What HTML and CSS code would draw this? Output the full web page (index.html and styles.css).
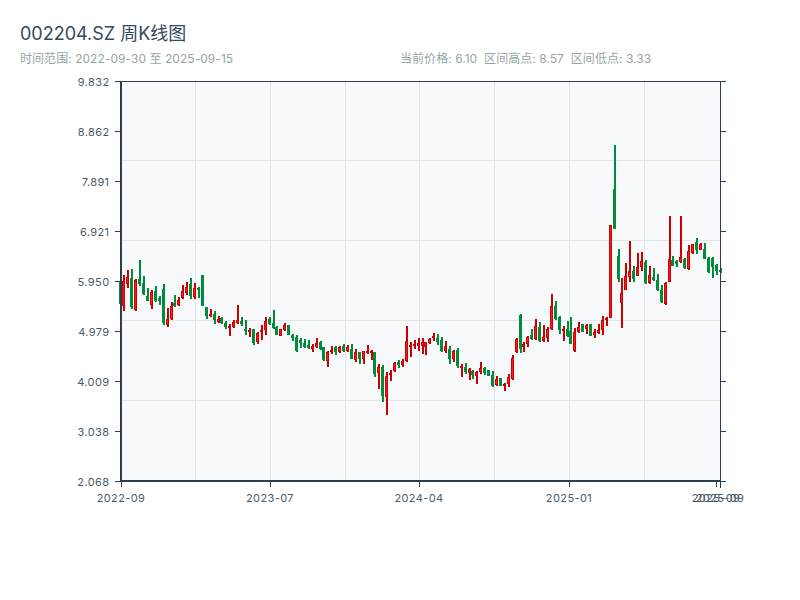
FILE: index.html
```html
<!DOCTYPE html>
<html lang="zh-CN">
<head>
  <meta charset="UTF-8">
  <title>002204.SZ 周K线图</title>
  <link rel="stylesheet" href="styles.css">
</head>
<body>
  <div class="page">
    <h1 class="title">002204.SZ 周K线图</h1>
    <div class="info">
      <span>时间范围: 2022-09-30 至 2025-09-15</span>
      <span>当前价格: 6.10 &nbsp;区间高点: 8.57 &nbsp;区间低点: 3.33</span>
    </div>
    <svg id="chart" class="chart" viewBox="20 70 760 460"></svg>
  </div>
  <script src="chart.js"></script>
</body>
</html>
```

FILE: styles.css
```css
* {
  margin: 0;
  padding: 0;
  box-sizing: border-box;
}
body {
  background: #fff;
  font-family: Inter, "Noto Sans CJK SC", sans-serif;
}
.page {
  padding: 20px 20px 0;
}
.title {
  font-size: 18px;
  font-weight: 400;
  line-height: 28px;
  color: #34495e;
}
.info {
  display: grid;
  grid-template-columns: 1fr 1fr;
  margin: 3px 0;
  font-size: 12px;
  line-height: 16px;
  letter-spacing: 0.05px;
  color: #95a5a6;
}
.chart {
  display: block;
  width: 760px;
  height: 460px;
}
.plot {
  fill: #f8f9fa;
}
.grid {
  stroke: #e2e6ea;
  stroke-width: 1;
}
.axis {
  stroke: #2c3e50;
  stroke-width: 1;
  fill: none;
}
.axis-main {
  stroke: #2c3e50;
  stroke-width: 2;
}
.label {
  font-size: 11px;
  letter-spacing: 0.4px;
  fill: #4a5b6c;
}
.label-y {
  text-anchor: end;
}
.label-x {
  text-anchor: middle;
}
.up-line {
  fill: #cc0000;
}
.up-body {
  fill: #ff1a1a;
  stroke: #cc0000;
  stroke-width: 1;
}
.down-line,
.down-body {
  fill: #008c3a;
}
```

FILE: chart.js
```js
// x, high, low, body top, body bottom, r = red / g = green (page pixels)
const candles = [
  [120,281,304,281,304,'g'],[123.7,275,311,281,306,'r'],[127.7,270,288,277,284,'r'],[131.7,269,309,278,307,'g'],
  [135.3,279,311,280,310,'r'],[139.7,260,286,279,284,'g'],[143.3,276,295,283,294,'g'],[147.3,288,301,296,301,'g'],
  [151.3,290,309,292,305,'r'],[155.3,286,302,291,301,'g'],[159.3,296,305,298,301,'g'],[163.3,284,325,289,323,'g'],
  [167.3,308,327,319,325,'r'],[171,302,320,306,319,'r'],[174.3,295,307,303,306,'g'],[178.3,297,306,300,305,'r'],
  [182.3,285,299,291,298,'r'],[186.3,282,295,287,293,'r'],[190.3,278,299,284,296,'g'],[194.3,283,299,288,297,'r'],
  [198.3,287,298,288,290,'g'],[202.3,275,306,275,306,'g'],[206.3,307,319,307,316,'g'],[210.3,309,317,314,316,'r'],
  [214.3,311,324,314,320,'g'],[218.3,316,323,319,322,'r'],[221.7,317,324,318,323,'g'],[225.7,321,329,323,327,'g'],
  [229.7,324,336,326,328,'r'],[233.7,320,328,322,327,'r'],[237.7,305,324,320,323,'r'],[241.7,317,326,321,324,'g'],
  [245.7,320,335,329,331,'g'],[249.7,328,337,330,332,'r'],[253.7,329,345,329,343,'g'],[257.7,332,344,333,342,'r'],
  [261.7,325,340,330,332,'r'],[265.3,317,335,321,330,'r'],[269.3,317,325,319,324,'g'],[273,310,329,323,328,'g'],
  [276.3,326,335,327,335,'g'],[280.3,329,336,329,336,'r'],[284.3,323,331,325,330,'r'],[288.3,325,335,325,335,'g'],
  [292.3,334,341,335,338,'g'],[296.3,335,352,337,351,'g'],[300.7,338,348,340,343,'g'],[304.7,339,348,343,347,'g'],
  [308.7,340,349,345,348,'g'],[312.7,344,352,346,349,'r'],[316.7,338,348,343,347,'r'],[320.7,341,350,342,349,'g'],
  [323.7,347,361,347,360,'g'],[327.7,351,367,352,361,'r'],[331.7,346,354,350,352,'r'],[335.7,346,355,347,352,'g'],
  [339.7,346,353,347,352,'r'],[343.7,344,352,346,351,'g'],[347.7,345,352,347,351,'r'],[351.7,344,359,349,359,'g'],
  [355.7,349,362,352,360,'r'],[359.7,352,364,352,359,'g'],[363.3,351,364,351,359,'r'],[367.7,345,354,351,353,'r'],
  [371,350,360,351,353,'r'],[374.7,352,377,352,374,'g'],[378.7,364,389,367,373,'r'],[382.7,365,402,367,396,'g'],
  [386.7,372,415,376,397,'r'],[390.7,370,381,373,375,'r'],[394.7,362,372,363,371,'r'],[398.7,360,368,362,365,'g'],
  [402.7,359,367,361,365,'r'],[406.7,326,362,341,361,'r'],[410.7,342,357,345,347,'r'],[414.7,340,349,344,346,'r'],
  [418.7,338,351,343,346,'r'],[422,338,354,342,346,'r'],[425.7,342,355,342,347,'r'],[429.3,338,344,339,343,'r'],
  [433.3,333,341,336,338,'r'],[437.3,334,345,338,342,'g'],[441.3,337,352,340,351,'g'],[445.3,341,353,346,351,'r'],
  [449.3,346,364,349,359,'g'],[453.3,350,362,351,359,'r'],[457.3,348,368,350,366,'g'],[461.3,364,377,366,368,'r'],
  [465.3,363,374,367,372,'g'],[469.3,368,380,369,373,'r'],[472.7,370,379,371,375,'g'],[476.7,371,384,372,376,'r'],
  [480.7,362,374,368,372,'r'],[484.7,367,375,368,373,'g'],[488.7,370,376,370,376,'g'],[492.7,371,387,375,386,'g'],
  [496.7,376,386,379,385,'r'],[500.7,378,386,378,386,'g'],[504.7,383,391,384,386,'r'],[508.7,374,387,377,384,'r'],
  [512.7,355,380,358,379,'r'],[516.7,338,353,339,352,'r'],[520.7,314,353,315,349,'g'],[523.7,342,352,344,347,'r'],
  [527.7,336,347,337,344,'r'],[531.7,329,340,335,339,'g'],[535.7,319,340,326,339,'r'],[539.7,322,342,327,341,'g'],
  [543.7,325,342,337,341,'r'],[547.7,327,342,329,338,'r'],[551.7,294,330,306,329,'r'],[555.7,301,320,306,319,'g'],
  [559.7,316,334,317,330,'g'],[563.7,326,341,329,331,'r'],[567.7,321,337,329,336,'g'],[570.7,317,344,331,344,'g'],
  [574.7,328,352,332,351,'r'],[578.7,322,333,327,332,'r'],[582.7,324,332,324,332,'g'],[586.7,324,334,325,329,'r'],
  [590.7,324,336,324,336,'g'],[594.7,329,338,332,335,'r'],[598.7,324,334,330,333,'r'],[602.7,316,335,320,330,'r'],
  [606.7,317,326,318,320,'r'],[610.7,225,318,225,318,'r'],[614.5,145,229,189,229,'g'],[618.7,249,282,256,279,'g'],
  [621.7,278,328,293,303,'r'],[625.7,263,290,276,290,'r'],[629.7,241,282,271,277,'r'],[633.7,266,282,271,279,'g'],
  [637.7,253,276,267,276,'r'],[641.7,252,271,261,267,'r'],[645.7,260,284,262,283,'g'],[649.7,266,284,275,283,'r'],
  [653.7,268,281,277,280,'g'],[657.7,274,291,280,290,'g'],[661.7,285,303,290,302,'g'],[665.7,282,305,283,304,'r'],
  [669.7,216,282,259,282,'r'],[672.7,256,266,260,266,'g'],[676.7,260,267,261,264,'g'],[680.7,216,263,257,262,'r'],
  [684.7,258,269,259,268,'g'],[688.7,245,270,251,269,'r'],[692.3,244,254,244,253,'r'],[696.3,238,254,242,250,'g'],
  [700.3,243,250,244,250,'r'],[704.3,243,259,249,259,'g'],[708.3,257,273,258,272,'g'],[712.3,257,278,258,267,'g'],
  [716.3,264,275,265,271,'g'],[720.3,268,273,270,272,'g']
]
const yTicks = ['9.832', '8.862', '7.891', '6.921', '5.950', '4.979', '4.009', '3.038', '2.068']
const xTicks = [[121, '2022-09'], [270, '2023-07'], [419, '2024-04'], [569, '2025-01'], [716, '2025-09'], [720, '2025-09']]
const chart = document.querySelector('#chart')

function add(tag, attrs, text) {
  const el = document.createElementNS('http://www.w3.org/2000/svg', tag)
  for (const key in attrs) {
    el.setAttribute(key, attrs[key])
  }
  if (text) el.textContent = text
  chart.appendChild(el)
}
function line(x1, y1, x2, y2, cls) {
  add('line', { x1, y1, x2, y2, class: cls })
}

add('rect', { x: 121, y: 81, width: 599, height: 400, class: 'plot' })

// grid
for (const y of [160.5, 240.5, 320.5, 400.5]) line(121, y, 720, y, 'grid')
for (const x of [195.5, 270.5, 345.5, 419.5, 494.5, 569.5, 644.5]) line(x, 81, x, 481, 'grid')

// candles
for (const [x, high, low, top, bottom, dir] of candles) {
  const left = Math.floor(x)
  if (dir === 'r') {
    add('rect', { x: left, y: high, width: 2, height: low - high, class: 'up-line' })
    add('rect', { x: left - 0.5, y: top + 0.5, width: 2, height: bottom - top - 1, class: 'up-body' })
  } else {
    add('rect', { x: left, y: high, width: 2, height: low - high, class: 'down-line' })
    add('rect', { x: left - 1, y: top, width: 3, height: bottom - top, class: 'down-body' })
  }
}

// axes
line(121, 81, 121, 482, 'axis-main')
line(120, 481, 720, 481, 'axis-main')
line(121, 81.5, 720, 81.5, 'axis')
line(720.5, 81, 720.5, 488, 'axis')

yTicks.forEach((label, i) => {
  const y = 81.5 + i * 50
  line(115, y, 121, y, 'axis')
  line(720, y, 726, y, 'axis')
  add('text', { x: 109.5, y: y + 4, class: 'label label-y' }, label)
})
for (const [x, label] of xTicks) {
  line(x + 0.5, 481, x + 0.5, 487, 'axis')
  add('text', { x: x, y: 501.5, class: 'label label-x' }, label)
}
```
